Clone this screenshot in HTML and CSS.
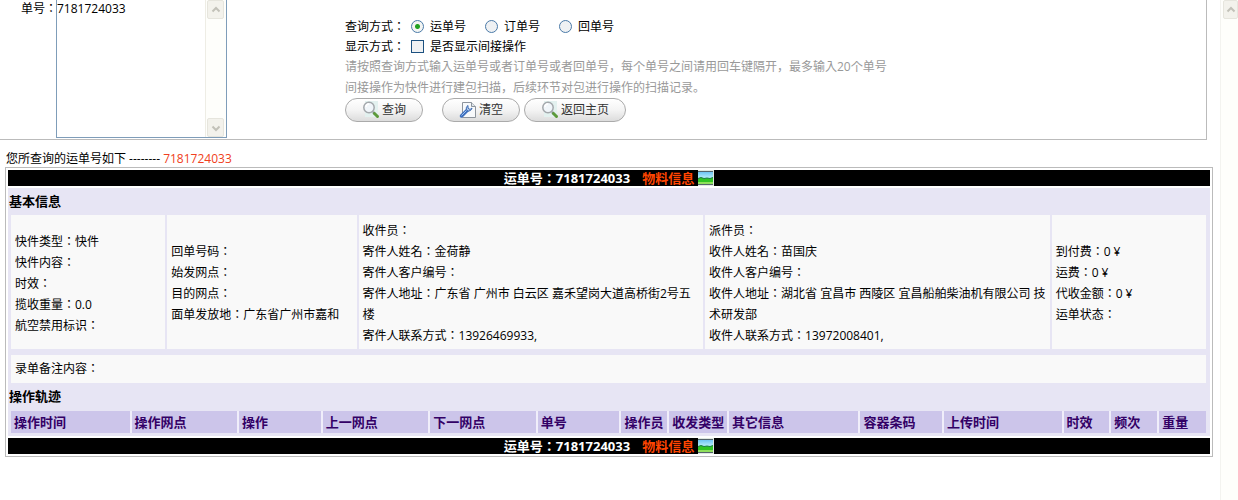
FILE: index.html
```
<!DOCTYPE html>
<html>
<head>
    <meta charset="UTF-8">
    <meta name="viewport" content="width=device-width, initial-scale=1.0">
    <title>运单查询</title>
    <link rel="stylesheet" href="styles.css">
</head>
<body>
    <svg class="symbols" aria-hidden="true">
        <linearGradient id="sky" x1="0" y1="0" x2="0" y2="1">
            <stop offset="0" stop-color="#6cc4f4"/>
            <stop offset="1" stop-color="#c4f6fa"/>
        </linearGradient>
        <symbol id="icon-search" viewBox="0 0 18 18">
            <rect x="3" y="0" width="13" height="16" fill="#e3f1ef"/>
            <path d="M11 11l1.500 1.500" stroke="#8a9096" stroke-width="2.500"/>
            <path d="M12.500 12.500l3 3" stroke="#5c9a3a" stroke-width="3" stroke-linecap="round"/>
            <circle cx="7" cy="6.500" r="5.200" fill="#f1f6fa" stroke="#a4a8ac" stroke-width="1.500"/>
            <path d="M4 6a3 3 0 0 1 3-3" fill="none" stroke="#fff" stroke-width="1.500"/>
        </symbol>
        <symbol id="icon-clear" viewBox="0 0 18 18">
            <path d="M3.500 1.500h9l4 4v11h-13z" fill="#f7f9fb" stroke="#8d949c"/>
            <path d="M12.500 1.500v4h4" fill="#dfe5ea" stroke="#8d949c"/>
            <path d="M2.500 15l6-6" stroke="#3c6fbe" stroke-width="3.500" stroke-linecap="round"/>
            <path d="M8 9.500a3.300 3.300 0 0 1 1-5l0 2.500 2 1.500 2-1.500a3.300 3.300 0 0 1-5 2.500z" fill="#a9c4ea" stroke="#3f6db3"/>
            <path d="M2.500 14.500l5-5" stroke="#9dc0f0"/>
        </symbol>
        <symbol id="icon-picture" viewBox="0 0 16 16">
            <rect width="16" height="16" fill="#dfe8e0"/>
            <rect y="1" width="15" height="14" fill="#54646c"/>
            <rect y="2" width="15" height="7" fill="url(#sky)"/>
            <path d="M0 8.500l3-1 3 1 3-.5 3 .5 3-1V14H0z" fill="#2fc423"/>
            <path d="M0 8.500l3-1 3 1 3-.5 3 .5 3-1" fill="none" stroke="#167a45"/>
            <path d="M0 12h15v2H0z" fill="#8fe05c"/>
        </symbol>
        <symbol id="icon-up" viewBox="0 0 10 10">
            <path d="M1.500 6.500L5 3l3.500 3.500" fill="none" stroke="#c2c1b8" stroke-width="2"/>
        </symbol>
        <symbol id="icon-down" viewBox="0 0 10 10">
            <path d="M1.500 3.500L5 7l3.500-3.500" fill="none" stroke="#c2c1b8" stroke-width="2"/>
        </symbol>
    </svg>

    <div class="page">
        <main class="content">
            <form class="query" action="#" method="post">
                <label class="query-label" for="billNo">单号：</label>
                <div class="bill-box">
                    <textarea id="billNo" class="bill-input" name="billNo">7181724033</textarea>
                    <div class="bill-scroll">
                        <span class="scroll-btn"><svg><use href="#icon-up"/></svg></span>
                        <span class="scroll-btn"><svg><use href="#icon-down"/></svg></span>
                    </div>
                </div>
                <div class="options">
                    <div class="option-row">
                        <span class="option-name">查询方式：</span>
                        <label class="option"><input type="radio" name="queryType" value="1" checked>运单号</label>
                        <label class="option"><input type="radio" name="queryType" value="2">订单号</label>
                        <label class="option"><input type="radio" name="queryType" value="3">回单号</label>
                    </div>
                    <div class="option-row">
                        <span class="option-name">显示方式：</span>
                        <label class="option"><input type="checkbox" name="indirect">是否显示间接操作</label>
                    </div>
                    <p class="hint">请按照查询方式输入运单号或者订单号或者回单号，每个单号之间请用回车键隔开，最多输入20个单号</p>
                    <p class="hint">间接操作为快件进行建包扫描，后续环节对包进行操作的扫描记录。</p>
                    <div class="buttons">
                        <button type="submit" class="btn btn-query"><svg><use href="#icon-search"/></svg>查询</button>
                        <button type="reset" class="btn"><svg><use href="#icon-clear"/></svg>清空</button>
                        <button type="button" class="btn"><svg><use href="#icon-search"/></svg>返回主页</button>
                    </div>
                </div>
            </form>

            <p class="summary">您所查询的运单号如下 -------- <span class="summary-no">7181724033</span></p>

            <section class="result">
                <div class="bar">
                    <span>运单号：7181724033</span>
                    <a class="bar-link" href="#">物料信息<svg><use href="#icon-picture"/></svg></a>
                </div>
                <div class="detail">
                    <h2 class="title">基本信息</h2>
                    <table class="info">
                        <colgroup>
                            <col class="w13"><col class="w16"><col class="w29"><col class="w29"><col class="w13">
                        </colgroup>
                        <tr>
                            <td>快件类型：快件<br>快件内容：<br>时效：<br>揽收重量：0.0<br>航空禁用标识：</td>
                            <td>回单号码：<br>始发网点：<br>目的网点：<br>面单发放地：广东省广州市嘉和</td>
                            <td>收件员：<br>寄件人姓名：金荷静<br>寄件人客户编号：<br>寄件人地址：广东省 广州市 白云区 嘉禾望岗大道高桥街2号五<br>楼<br>寄件人联系方式：13926469933,</td>
                            <td>派件员：<br>收件人姓名：苗国庆<br>收件人客户编号：<br>收件人地址：湖北省 宜昌市 西陵区 宜昌船舶柴油机有限公司 技<br>术研发部<br>收件人联系方式：13972008401,</td>
                            <td>到付费：0 ¥<br>运费：0 ¥<br>代收金额：0 ¥<br>运单状态：</td>
                        </tr>
                    </table>
                    <div class="remark">录单备注内容：</div>
                    <h2 class="title">操作轨迹</h2>
                    <table class="track">
                        <colgroup>
                            <col class="w10"><col class="w9"><col class="w7"><col class="w9"><col class="w9"><col class="w7"><col class="w4">
                            <col class="w5"><col class="w11"><col class="w7"><col class="w10"><col class="w4"><col class="w4"><col class="w4">
                        </colgroup>
                        <tr>
                            <th>操作时间</th>
                            <th>操作网点</th>
                            <th>操作</th>
                            <th>上一网点</th>
                            <th>下一网点</th>
                            <th>单号</th>
                            <th>操作员</th>
                            <th>收发类型</th>
                            <th>其它信息</th>
                            <th>容器条码</th>
                            <th>上传时间</th>
                            <th>时效</th>
                            <th>频次</th>
                            <th>重量</th>
                        </tr>
                    </table>
                </div>
                <div class="bar">
                    <span>运单号：7181724033</span>
                    <a class="bar-link" href="#">物料信息<svg><use href="#icon-picture"/></svg></a>
                </div>
            </section>
        </main>
        <div class="page-scroll">
            <span class="scroll-btn"><svg><use href="#icon-up"/></svg></span>
        </div>
    </div>
</body>
</html>
```
FILE: styles.css
```
* {
    box-sizing: border-box;
}
body {
    margin: 0;
    background: #fff;
    color: #000;
    font-family: "Open Sans", "Noto Sans CJK JP", sans-serif;
    font-size: 12px;
    line-height: 20px;
}
p, h2 {
    margin: 0;
}
.symbols {
    display: block;
    width: 0;
    height: 0;
}
.page {
    display: flex;
    min-height: 100vh;
}
.content {
    flex: 1;
    padding: 0 7px 0 5px;
}

/* 查询条件 */
.query {
    display: flex;
    margin: 0 6px 0 -5px;
    padding-bottom: 1px;
    border-right: 1px solid #bbb;
    border-bottom: 1px solid #bbb;
}
.query-label {
    width: 56px;
    padding-left: 21px;
    line-height: 17px;
    white-space: nowrap;
}
.bill-box {
    display: flex;
    width: 171px;
    height: 138px;
    border: 1px solid #7f9db9;
    border-top: none;
    background: #fff;
}
.bill-input {
    flex: 1;
    min-width: 0;
    padding: 0;
    border: none;
    outline: none;
    resize: none;
    overflow: hidden;
    font: inherit;
    line-height: 17px;
}
.bill-scroll {
    display: flex;
    flex-direction: column;
    justify-content: space-between;
    width: 21px;
    padding: 0 2px 0 1px;
    border-left: 1px solid #eeede5;
    background: #fefefb;
}
.scroll-btn {
    display: flex;
    align-items: center;
    justify-content: center;
    height: 19px;
    border: 1px solid #e6e5dd;
    border-radius: 2px;
    background: #f3f2ec;
}
.scroll-btn svg {
    width: 10px;
    height: 10px;
}
.options {
    flex: 1;
    padding: 16px 0 0 118px;
}
.option-row {
    display: flex;
    height: 20px;
    line-height: 21px;
}
.option-name {
    width: 66px;
}
.option {
    display: flex;
    align-items: center;
    width: 74px;
    white-space: nowrap;
}
.option input {
    appearance: none;
    flex: none;
    width: 13px;
    height: 13px;
    margin: 0 6px 0 0;
    border: 1px solid #1c5180;
    background: #eff1f3;
}
.option input[type="radio"] {
    border-color: #4a7aa8;
    border-radius: 50%;
}
.option input[type="radio"]:checked {
    background: radial-gradient(circle, #21a121 0 2px, #f3f5f3 3px);
}
.hint {
    color: #999;
    line-height: 21px;
}
.buttons {
    display: flex;
    gap: 4px;
}
.btn {
    display: flex;
    align-items: center;
    gap: 2px;
    height: 24px;
    padding: 0 16px;
    border: 1px solid #aaa;
    border-radius: 12px;
    background: linear-gradient(#fff, #f4f4f4 50%, #dcdcdc);
    color: #333;
    font: inherit;
    cursor: pointer;
}
.btn-query {
    margin-right: 15px;
}
.btn svg {
    width: 18px;
    height: 18px;
}

/* 查询结果 */
.summary {
    padding: 11px 1px 0;
    line-height: 16px;
}
.summary-no {
    color: #f04020;
}
.result {
    padding: 2px;
    border: 1px solid #bbb;
}
.bar {
    display: flex;
    align-items: center;
    justify-content: center;
    gap: 12px;
    height: 16px;
    background: #000;
    color: #fff;
    font-size: 13px;
    font-weight: bold;
    line-height: 16px;
}
.bar-link {
    display: flex;
    align-items: center;
    gap: 4px;
    color: #ff4500;
    text-decoration: none;
}
.bar-link svg {
    width: 16px;
    height: 16px;
}
.detail {
    margin: 2px 0;
    padding: 0 4px 3px 3px;
    background: #e7e5f4;
}
.title {
    margin-left: -2px;
    font-size: 13px;
    line-height: 27px;
}
.info, .track {
    width: 100%;
    table-layout: fixed;
    border-collapse: collapse;
}
.info td {
    height: 134px;
    padding: 5px 0 3px 4px;
    border-right: 2px solid #e7e5f4;
    background: #f9f9f9;
    line-height: 21px;
    white-space: nowrap;
}
.info td:last-child, .track th:last-child {
    border-right: none;
}
.remark {
    margin-top: 6px;
    padding: 0 4px;
    background: #f9f9f9;
    line-height: 28px;
}
.track {
    margin-top: 1px;
}
.track th {
    height: 22px;
    padding: 0 0 0 3px;
    border-right: 2px solid #f0eefa;
    background: #ccc5ea;
    color: #306;
    font-size: 13px;
    line-height: 20px;
    text-align: left;
    white-space: nowrap;
}
.w4 { width: 4%; }
.w5 { width: 5%; }
.w7 { width: 7%; }
.w9 { width: 9%; }
.w10 { width: 10%; }
.w11 { width: 11%; }
.w13 { width: 13%; }
.w16 { width: 16%; }
.w29 { width: 29%; }

.page-scroll {
    width: 18px;
    padding-left: 2px;
    border-left: 1px solid #f3f3ef;
    background: #fefefb;
}
```
